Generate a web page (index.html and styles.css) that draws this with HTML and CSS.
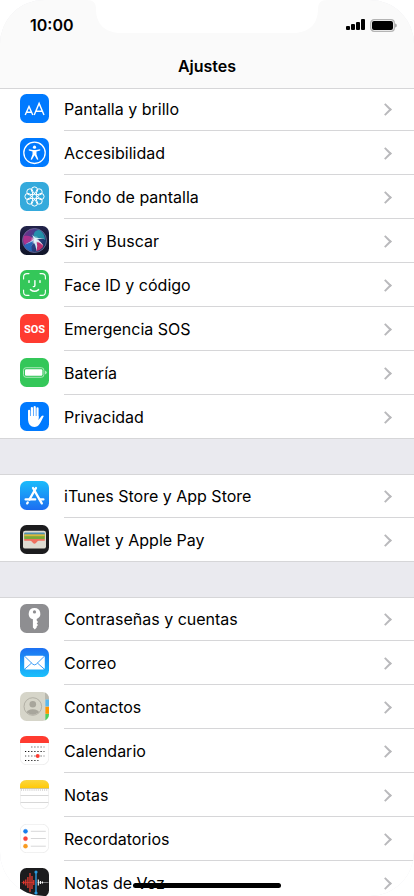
FILE: index.html
```html
<!DOCTYPE html>
<html lang="es">

<head>
    <meta charset="UTF-8">
    <meta name="viewport" content="width=device-width, initial-scale=1.0">
    <title>Ajustes</title>
    <link rel="stylesheet" href="styles.css">
</head>

<body>
    <div class="screen">
        <header class="header">
            <svg class="notch" viewBox="0 0 240 34" aria-hidden="true">
                <path d="M0 0 C6 0 9 3 9 9 C9 24 18 33 34 33 H206 C222 33 231 24 231 9 C231 3 234 0 240 0 Z" fill="#fff" />
            </svg>
            <div class="status-bar">
                <span class="time">10:00</span>
                <div class="status-icons">
                    <svg width="19" height="12" viewBox="0 0 19 12">
                        <rect x="0" y="7" width="4" height="4" rx="1" />
                        <rect x="5" y="5" width="4" height="6" rx="1" />
                        <rect x="10" y="3" width="4" height="8" rx="1" />
                        <rect x="15" y="0" width="4" height="11" rx="1" />
                    </svg>
                    <svg width="27" height="13" viewBox="0 0 27 13">
                        <rect x=".7" y=".7" width="23.6" height="11.6" rx="3.4" fill="none" stroke="#b4b4b4" stroke-width="1.3" />
                        <rect x="2" y="2" width="21" height="9" rx="2" />
                        <path d="M25.2 4.5 C27.2 5 27.2 8 25.2 8.5 Z" fill="#999" />
                    </svg>
                </div>
            </div>
            <h1 class="title">Ajustes</h1>
        </header>

        <main class="settings">
            <nav class="group">
                <a class="row" href="#">
                    <svg class="icon" viewBox="0 0 29 29">
                        <rect width="29" height="29" rx="6.5" fill="#007aff" />
                        <g fill="none" stroke="#fff" stroke-width="1.4">
                            <path d="M5.2 21 L9 12.4 L12.8 21 M6.5 18.2 H11.5" />
                            <path d="M14.2 21 L19.1 9.4 L24 21 M15.8 17.2 H22.4" />
                        </g>
                    </svg>
                    <span class="label">Pantalla y brillo</span>
                </a>
                <a class="row" href="#">
                    <svg class="icon" viewBox="0 0 29 29">
                        <rect width="29" height="29" rx="6.5" fill="#007aff" />
                        <circle cx="14.5" cy="14.8" r="10.7" fill="none" stroke="#fff" stroke-width="1.3" />
                        <circle cx="14.5" cy="9.2" r="1.6" fill="#fff" />
                        <path d="M8.8 11.3 L13 12 H16 L20.2 11.3 V12.6 L16.5 13.5 V16.4 L18.4 21.4 L17.1 21.8 L14.7 17.4 H14.3 L11.9 21.8 L10.6 21.4 L12.5 16.4 V13.5 L8.8 12.6 Z" fill="#fff" />
                    </svg>
                    <span class="label">Accesibilidad</span>
                </a>
                <a class="row" href="#">
                    <svg class="icon" viewBox="0 0 29 29">
                        <rect width="29" height="29" rx="6.5" fill="#35aadc" />
                        <g fill="none" stroke="#fff" stroke-width="1">
                            <circle cx="14.5" cy="8" r="3.1" />
                            <circle cx="19.1" cy="9.9" r="3.1" />
                            <circle cx="21" cy="14.5" r="3.1" />
                            <circle cx="19.1" cy="19.1" r="3.1" />
                            <circle cx="14.5" cy="21" r="3.1" />
                            <circle cx="9.9" cy="19.1" r="3.1" />
                            <circle cx="8" cy="14.5" r="3.1" />
                            <circle cx="9.9" cy="9.9" r="3.1" />
                            <circle cx="14.5" cy="14.5" r="2.2" />
                            <path d="M14.5 11 V12.3 M14.5 16.7 V18 M11 14.5 H12.3 M16.7 14.5 H18 M12 12 L13 13 M16 16 L17 17 M17 12 L16 13 M13 16 L12 17" />
                        </g>
                    </svg>
                    <span class="label">Fondo de pantalla</span>
                </a>
                <a class="row" href="#">
                    <svg class="icon" viewBox="0 0 29 29">
                        <defs>
                            <linearGradient id="siri-bg" x1="0" y1="0" x2="0" y2="1">
                                <stop offset="0" stop-color="#22234a" />
                                <stop offset="1" stop-color="#101428" />
                            </linearGradient>
                            <linearGradient id="siri-orb" x1="0" y1=".2" x2="1" y2=".8">
                                <stop offset="0" stop-color="#7d2a86" />
                                <stop offset=".45" stop-color="#33468f" />
                                <stop offset="1" stop-color="#123058" />
                            </linearGradient>
                            <radialGradient id="siri-glow">
                                <stop offset="0" stop-color="#fff" />
                                <stop offset="1" stop-color="#fff" stop-opacity="0" />
                            </radialGradient>
                        </defs>
                        <rect width="29" height="29" rx="6.5" fill="url(#siri-bg)" />
                        <circle cx="14.5" cy="14.5" r="12" fill="url(#siri-orb)" stroke="#6f719c" stroke-width=".8" />
                        <path d="M14.5 14 C12 8 15 4 19 4 C23 6 25 10 25 14 C21 11 17 11 14.5 14 Z" fill="#22a9b5" opacity=".75" />
                        <path d="M14.5 14 C8 15 5 18 4 20 C7 24 10 25 12 25 C11 20 12 17 14.5 14 Z" fill="#2375c9" opacity=".75" />
                        <path d="M14.5 14 C21 16 24 18 23 21 C20 24 18 25 16 25 C18 20 17 17 14.5 14 Z" fill="#e02e70" opacity=".8" />
                        <path d="M4 10 C8 9 12 10 15 14 C11 15 7 17 5 19 C3 16 3 13 4 10 Z" fill="#cf318e" opacity=".7" />
                        <circle cx="15" cy="14" r="4.5" fill="url(#siri-glow)" />
                        <path d="M5 18.5 Q12 16.5 15 12 Q14 17 10.5 21 L14 16.5 Q16 20 16.5 25 Q18 20 16.5 15.5 Q20 16 23.5 20 Q20 14 16 13 L24.5 13 Q19 11.5 15.5 12 L12 8.5 L14 13 Q9 17 5 18.5 Z" fill="#e4fbff" opacity=".9" />
                    </svg>
                    <span class="label">Siri y Buscar</span>
                </a>
                <a class="row" href="#">
                    <svg class="icon" viewBox="0 0 29 29">
                        <rect width="29" height="29" rx="6.5" fill="#34c759" />
                        <g fill="none" stroke="#fff" stroke-width="1.4" stroke-linecap="round">
                            <path d="M3.6 9 V7 Q3.6 3.6 7 3.6 H9 M20 3.6 H22 Q25.4 3.6 25.4 7 V9 M25.4 20 V22 Q25.4 25.4 22 25.4 H20 M9 25.4 H7 Q3.6 25.4 3.6 22 V20" stroke-width="1.1" />
                            <path d="M9 10.6 V12.4 M20 10.6 V12.4 M14.9 10.6 V15.4 Q14.9 16.6 13.3 16.6 M10.4 19.6 Q14.5 23 18.6 19.6" />
                        </g>
                    </svg>
                    <span class="label">Face ID y código</span>
                </a>
                <a class="row" href="#">
                    <svg class="icon" viewBox="0 0 29 29">
                        <rect width="29" height="29" rx="6.5" fill="#ff3b30" />
                        <text class="sos" x="14.5" y="19" text-anchor="middle">SOS</text>
                    </svg>
                    <span class="label">Emergencia SOS</span>
                </a>
                <a class="row" href="#">
                    <svg class="icon" viewBox="0 0 29 29">
                        <rect width="29" height="29" rx="6.5" fill="#34c759" />
                        <rect x="3.5" y="9.7" width="20.4" height="9.6" rx="2.6" fill="none" stroke="#b5ebc2" stroke-width=".9" />
                        <rect x="5" y="11.2" width="17.4" height="6.6" rx="1.2" fill="#fff" />
                        <path d="M25 12.6 Q26.8 13.4 26.8 14.5 Q26.8 15.6 25 16.4 Z" fill="#b5ebc2" />
                    </svg>
                    <span class="label">Batería</span>
                </a>
                <a class="row" href="#">
                    <svg class="icon" viewBox="0 0 29 29">
                        <rect width="29" height="29" rx="6.5" fill="#007aff" />
                        <g fill="none" stroke="#fff" stroke-width="2.2" stroke-linecap="round">
                            <path d="M9.1 8.8 V17 M11.9 6 V16 M14.7 5.2 V16 M17.5 6.4 V16" />
                        </g>
                        <path d="M8.1 14 H18.5 V18 L21.6 14 Q23 12.9 23.8 14 C22.4 16.5 21.3 19.4 19.7 21.8 Q17.6 25 14.3 25 Q8.8 25 8.1 18.5 Z" fill="#fff" />
                    </svg>
                    <span class="label">Privacidad</span>
                </a>
            </nav>

            <nav class="group">
                <a class="row" href="#">
                    <svg class="icon" viewBox="0 0 29 29">
                        <defs>
                            <linearGradient id="store-bg" x1="0" y1="0" x2="0" y2="1">
                                <stop offset="0" stop-color="#1bbcfb" />
                                <stop offset="1" stop-color="#1d6df1" />
                            </linearGradient>
                        </defs>
                        <rect width="29" height="29" rx="6.5" fill="url(#store-bg)" />
                        <g fill="none" stroke="#fff" stroke-width="2.3" stroke-linecap="round">
                            <path d="M16 7 L9.4 18.6 M7.8 21.4 L7.2 22.4 M13 7 L21.8 22.4" />
                            <path d="M5.6 18.4 H15.2 M19.8 18.4 H23.4" />
                        </g>
                    </svg>
                    <span class="label">iTunes Store y App Store</span>
                </a>
                <a class="row" href="#">
                    <svg class="icon" viewBox="0 0 29 29">
                        <rect width="29" height="29" rx="6.5" fill="#1c1c1e" />
                        <rect x="3" y="5.8" width="23" height="17.8" rx="2.2" fill="#dedbd1" />
                        <rect x="4.2" y="7.4" width="20.6" height="4" rx="1" fill="#4f8fae" />
                        <rect x="4.2" y="9.3" width="20.6" height="3" fill="#d9b83c" />
                        <rect x="4.2" y="11.2" width="20.6" height="3" fill="#7ba838" />
                        <path d="M4.2 13.9 H24.8 V15.8 H19 Q17.7 15.8 16.9 17 Q14.5 20.4 12.1 17 Q11.3 15.8 10 15.8 H4.2 Z" fill="#f0705f" />
                    </svg>
                    <span class="label">Wallet y Apple Pay</span>
                </a>
            </nav>

            <nav class="group">
                <a class="row" href="#">
                    <svg class="icon" viewBox="0 0 29 29">
                        <rect width="29" height="29" rx="6.5" fill="#8e8e91" />
                        <path d="M14.5 4 A5.7 5.7 0 0 1 16.7 15 V16.5 L18 18 L16.7 19.5 L18 21 L16.7 22.5 V23.6 L14.8 25.4 L12.9 23.6 V15.2 A5.7 5.7 0 0 1 14.5 4 Z" fill="#fff" />
                        <circle cx="14.5" cy="7.9" r="1.6" fill="#8e8e91" />
                    </svg>
                    <span class="label">Contraseñas y cuentas</span>
                </a>
                <a class="row" href="#">
                    <svg class="icon" viewBox="0 0 29 29">
                        <defs>
                            <linearGradient id="mail-bg" x1="0" y1="0" x2="0" y2="1">
                                <stop offset="0" stop-color="#1d70f2" />
                                <stop offset="1" stop-color="#1ac0fb" />
                            </linearGradient>
                        </defs>
                        <rect width="29" height="29" rx="6.5" fill="url(#mail-bg)" />
                        <rect x="4.2" y="7.8" width="20.6" height="13.8" rx="1.8" fill="#fff" />
                        <path d="M4.8 8.4 L12.8 16.2 Q14.5 17.6 16.2 16.2 L24.2 8.4 M4.8 21 L11.6 15 M24.2 21 L17.4 15" fill="none" stroke="#2993f5" stroke-width=".9" />
                    </svg>
                    <span class="label">Correo</span>
                </a>
                <a class="row" href="#">
                    <svg class="icon" viewBox="0 0 29 29">
                        <defs>
                            <clipPath id="contacts-clip">
                                <rect width="29" height="29" rx="6.5" />
                            </clipPath>
                            <clipPath id="contacts-face">
                                <circle cx="12.8" cy="14.5" r="8.2" />
                            </clipPath>
                        </defs>
                        <g clip-path="url(#contacts-clip)">
                            <rect width="29" height="29" fill="#d6d5c9" />
                            <rect x="25" width="4" height="7.5" fill="#b9b8ae" />
                            <rect x="25.4" y="7.5" width="3.6" height="7" fill="#5ab8ef" />
                            <rect x="25.4" y="14.8" width="3.6" height="7" fill="#ff9500" />
                            <rect x="25.4" y="22" width="3.6" height="7" fill="#4cd05f" />
                        </g>
                        <circle cx="12.8" cy="14.5" r="8.8" fill="none" stroke="#a8a69c" stroke-width=".8" />
                        <g fill="#a8a69c" clip-path="url(#contacts-face)">
                            <circle cx="12.8" cy="12.2" r="3.3" />
                            <ellipse cx="12.8" cy="21.2" rx="6.6" ry="3.9" />
                        </g>
                    </svg>
                    <span class="label">Contactos</span>
                </a>
                <a class="row" href="#">
                    <svg class="icon" viewBox="0 0 29 29">
                        <rect x=".3" y=".3" width="28.4" height="28.4" rx="6.3" fill="#fff" stroke="#e2e2e2" stroke-width=".6" />
                        <path d="M0 7 V6.5 Q0 0 6.5 0 H22.5 Q29 0 29 6.5 V7 Z" fill="#ff3b30" />
                        <g fill="none" stroke="#111" stroke-width="1.2" stroke-dasharray="1.2 1.9">
                            <path d="M11.2 11 H24.4" stroke="#555" />
                            <path d="M5 15.5 H24.4" />
                            <path d="M5 20 H24.4" stroke="#555" />
                            <path d="M5 24.5 H18.4" />
                        </g>
                        <circle cx="17.7" cy="20" r="2" fill="#ff3b30" />
                    </svg>
                    <span class="label">Calendario</span>
                </a>
                <a class="row" href="#">
                    <svg class="icon" viewBox="0 0 29 29">
                        <defs>
                            <linearGradient id="notes-bg" x1="0" y1="0" x2="0" y2="1">
                                <stop offset="0" stop-color="#fbd740" />
                                <stop offset="1" stop-color="#ffc907" />
                            </linearGradient>
                        </defs>
                        <rect x=".3" y=".3" width="28.4" height="28.4" rx="6.3" fill="#fff" stroke="#e2e2e2" stroke-width=".6" />
                        <path d="M0 8.2 V6.5 Q0 0 6.5 0 H22.5 Q29 0 29 6.5 V8.2 Z" fill="url(#notes-bg)" />
                        <path d="M0 8.5 H29" stroke="#bdb288" stroke-width=".7" />
                        <path d="M1 10 H28" stroke="#b5b5b5" stroke-width="1" stroke-dasharray="1 1.1" />
                        <path d="M.5 15.5 H28.5 M.5 22.5 H28.5" stroke="#d4d4d4" stroke-width=".9" />
                    </svg>
                    <span class="label">Notas</span>
                </a>
                <a class="row" href="#">
                    <svg class="icon" viewBox="0 0 29 29">
                        <rect x=".3" y=".3" width="28.4" height="28.4" rx="6.3" fill="#fff" stroke="#e2e2e2" stroke-width=".6" />
                        <g stroke-width="1" stroke-opacity=".35">
                            <circle cx="5.5" cy="7.3" r="2.1" fill="#187fee" stroke="#187fee" />
                            <circle cx="5.5" cy="14.7" r="2.1" fill="#fb453c" stroke="#fb453c" />
                            <circle cx="5.5" cy="22.2" r="2.1" fill="#f89b20" stroke="#f89b20" />
                        </g>
                        <path d="M10.8 7.3 H25.8 M10.8 14.5 H25.8 M10.8 22.2 H25.8" stroke="#d2d2d4" stroke-width=".9" />
                    </svg>
                    <span class="label">Recordatorios</span>
                </a>
                <a class="row" href="#">
                    <svg class="icon" viewBox="0 0 29 29">
                        <rect width="29" height="29" rx="6.5" fill="#1c1c1e" />
                        <path d="M1.6 14.5 H14" stroke="#a3302c" stroke-width="1" />
                        <path d="M3.7 12.8 V16.2 M5.8 11.4 V17.6 M7.9 9 V20 M10 5 V24 M12 8 V21 M13.8 12 V17" stroke="#e5392f" stroke-width="1.3" />
                        <path d="M17.4 14.5 H28.5" stroke="#999" stroke-width=".8" />
                        <path d="M18.3 11.6 V17.4 M20.4 13 V16 M22.4 13.6 V15.4" stroke="#fff" stroke-width="1.1" />
                        <path d="M16 4 V25" stroke="#2a9be0" stroke-width="1.4" />
                        <circle cx="16" cy="4" r="1.6" fill="#2a9be0" />
                        <circle cx="16" cy="25" r="1.6" fill="#2a9be0" />
                    </svg>
                    <span class="label">Notas de Voz</span>
                </a>
            </nav>
        </main>
        <div class="home-indicator"></div>
    </div>
</body>

</html>
```
FILE: styles.css
```css
* {
    box-sizing: border-box;
}

body {
    margin: 0;
    background: #fff;
    color: #000;
    font-family: Inter, "Liberation Sans", sans-serif;
}

.screen {
    position: relative;
    height: 100vh;
    overflow: hidden;
    border-radius: 44px;
    background: #eaeaef;
}

.header {
    position: relative;
    z-index: 1;
    background: #fafafa;
    border-bottom: 1px solid #d6d6d8;
}

.notch {
    position: absolute;
    top: 0;
    left: 50%;
    width: 240px;
    height: 34px;
    transform: translateX(-50%);
}

.status-bar {
    display: flex;
    align-items: center;
    justify-content: space-between;
    height: 44px;
    padding: 6px 17px 0 30px;
}

.time {
    font-size: 16px;
    font-weight: 600;
}

.status-icons {
    display: flex;
    align-items: center;
    gap: 5px;
}

.title {
    margin: 0;
    font-size: 16px;
    font-weight: 600;
    line-height: 44px;
    text-align: center;
}

/* the list is scrolled a little way under the header */
.settings {
    margin-top: -2px;
}

.group {
    background: #fff;
}

.group + .group {
    margin-top: 35px;
    box-shadow: inset 0 1px #d6d6d8;
}

.row {
    display: flex;
    gap: 15px;
    height: 44px;
    padding-left: 20px;
    color: inherit;
    text-decoration: none;
}

.icon {
    flex: none;
    width: 29px;
    height: 29px;
    margin-top: 7px;
}

.label {
    display: flex;
    flex: 1;
    align-items: center;
    justify-content: space-between;
    padding: 1px 24px 0 0;
    border-bottom: 1px solid #d6d6d8;
    font-size: 16px;
}

.label::after {
    content: "";
    box-sizing: border-box;
    width: 9px;
    height: 9px;
    border-top: 2px solid #b9b9bc;
    border-right: 2px solid #b9b9bc;
    transform: rotate(45deg);
}

.row:last-child {
    border-bottom: 1px solid #d6d6d8;
}

.row:last-child .label {
    border-bottom: none;
}

.sos {
    fill: #fff;
    font-family: Roboto, "Liberation Sans", sans-serif;
    font-size: 11px;
    font-weight: 700;
}

.home-indicator {
    position: absolute;
    bottom: 8px;
    left: 50%;
    width: 148px;
    height: 5px;
    border-radius: 3px;
    background: #000;
    transform: translateX(-50%);
}
```
